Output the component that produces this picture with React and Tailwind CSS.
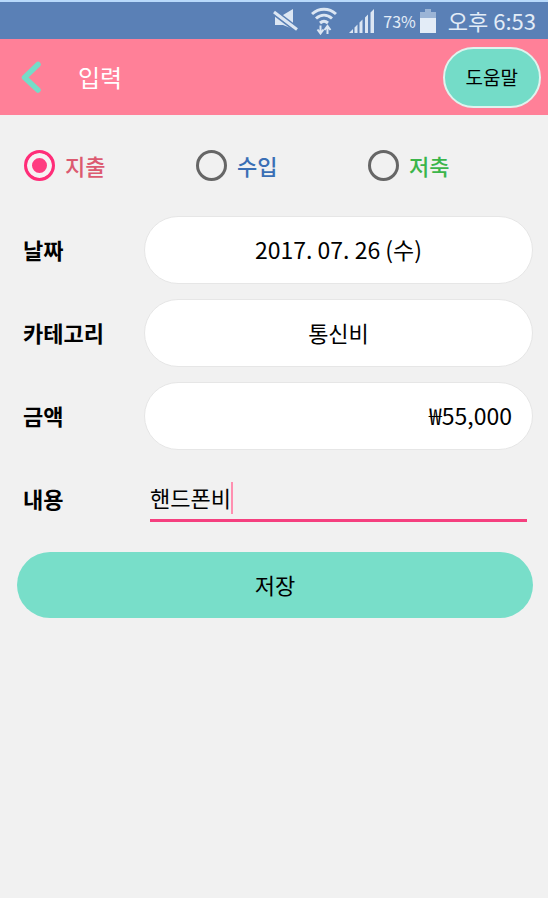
import React, { useState } from "react";

const TYPES = [
  { value: "expense", label: "지출", color: "text-[#dc5a70]" },
  { value: "income", label: "수입", color: "text-[#3a6fb5]" },
  { value: "saving", label: "저축", color: "text-[#3bb54a]" },
];

const fieldClass =
  "h-[68px] min-w-0 flex-1 appearance-none rounded-[34px] border border-[#e6e6e6] bg-white px-5 pb-[2px] text-black outline-none";

const StatusBar = () => (
  <div className="flex h-[39px] items-center justify-end border-t-2 border-[#b8d9fb] bg-[#5a80b6] pr-3 text-[#e3ecf7]">
    {/* Muted */}
    <svg className="mr-3 h-[24px] w-[26px]" viewBox="0 0 26 24" fill="none">
      <path d="M2 6h8l10-6v20l-10-4H2z" fill="#dce6f3" />
      <path d="M1 0.500l23 17.500" stroke="#5a80b6" strokeWidth="2" />
      <path d="M0 5l23 17.500" stroke="#5a80b6" strokeWidth="2" />
      <path d="M1 3l23 17.500" stroke="#dce6f3" strokeWidth="3" />
    </svg>
    {/* Wifi */}
    <svg className="mr-3 h-[28px] w-[26px]" viewBox="0 0 26 28" fill="none" stroke="#dce6f3" strokeWidth="3">
      <path d="M1 7c7-6.500 17-6.500 24 0" />
      <path d="M5 11.500c5-4.500 11-4.500 16 0" />
      <path d="M9 16c3-2.500 5-2.500 8 0" />
      <path d="M9.500 18.500v8M6.500 22.500l3 4 3-4" strokeWidth="2" />
      <path d="M16.500 27v-8M13.500 23l3-4 3 4" strokeWidth="2" />
    </svg>
    {/* Signal */}
    <svg className="mr-2 h-[24px] w-[26px]" viewBox="0 0 26 24" fill="#dce6f3">
      <path d="M0 24l4-4v4zM5.500 24v-5.500l3-3V24zM10.500 24V13.500l3-3V24zM16 24V8.500l3-3V24zM21.500 24V3.500L25 0v24z" />
    </svg>
    <span className="text-[16px]">73%</span>
    <svg className="mr-3 ml-1 h-[24px] w-[16px]" viewBox="0 0 16 24">
      <path d="M5 0h6v3h5v6H0V3h5z" fill="#9bb4d6" />
      <path d="M0 9h16v15H0z" fill="#e3ecf7" />
    </svg>
    <span className="text-[22px]">오후 6:53</span>
  </div>
);

const Header = () => (
  <header className="flex h-[76px] items-center bg-[#ff8098] pr-[7px] pl-5">
    <button type="button" aria-label="뒤로" className="mr-9">
      <svg className="h-[32px] w-[22px]" viewBox="0 0 22 32" fill="none">
        <path d="M18 3.500L4.500 16.500L18 29" stroke="#74dcc8" strokeWidth="5.500" strokeLinecap="round" strokeLinejoin="round" />
      </svg>
    </button>
    <h1 className="text-[24px] text-white">입력</h1>
    <button
      type="button"
      className="ml-auto h-[61px] rounded-full border-2 border-[#dff3ee] bg-[#74dcc8] px-[21px] text-[19px] text-black"
    >
      도움말
    </button>
  </header>
);

const Row = ({ id, label, children }) => (
  <div className="flex items-center">
    <label htmlFor={id} className="w-[127px] shrink-0 pb-[2px] pl-[6px] font-bold">
      {label}
    </label>
    {children}
  </div>
);

const App = () => {
  const [type, setType] = useState("expense");
  const [date, setDate] = useState("2017. 07. 26 (수)");
  const [category, setCategory] = useState("통신비");
  const [amount, setAmount] = useState("₩55,000");
  const [memo, setMemo] = useState("핸드폰비");

  const handleSubmit = (e) => {
    e.preventDefault();
  };

  return (
    <div className="flex min-h-screen flex-col border-b-2 border-white bg-[#f1f1f1] font-['Noto_Sans_CJK_KR',sans-serif]">
      <StatusBar />
      <Header />

      <form onSubmit={handleSubmit} className="flex flex-col gap-[15px] pr-[15px] pl-[17px] text-[22px] text-black">
        {/* Type */}
        <div className="grid h-[86px] grid-cols-3 items-center pt-[15px]">
          {TYPES.map((item) => (
            <label key={item.value} className={`flex items-center gap-[10px] pl-[7px] font-medium ${item.color}`}>
              <input
                type="radio"
                name="type"
                value={item.value}
                checked={type === item.value}
                onChange={() => setType(item.value)}
                className="size-[31px] appearance-none rounded-full border-3 border-[#666666] checked:border-[#ff2d78] checked:bg-[#ff3b80] checked:shadow-[inset_0_0_0_5px_#f6f1f3]"
              />
              {item.label}
            </label>
          ))}
        </div>

        <Row id="date" label="날짜">
          <input
            id="date"
            type="text"
            value={date}
            onChange={(e) => setDate(e.target.value)}
            className={`${fieldClass} text-center text-[23px]`}
          />
        </Row>

        <Row id="category" label="카테고리">
          <select
            id="category"
            value={category}
            onChange={(e) => setCategory(e.target.value)}
            className={`${fieldClass} text-center`}
          >
            <option value="통신비">통신비</option>
          </select>
        </Row>

        <Row id="amount" label="금액">
          <input
            id="amount"
            type="text"
            value={amount}
            onChange={(e) => setAmount(e.target.value)}
            className={`${fieldClass} text-right text-[23px]`}
          />
        </Row>

        {/* Memo */}
        <Row id="memo" label="내용">
          <div className="flex h-[68px] min-w-0 flex-1 items-center px-[6px]">
            <div className="flex h-[46px] flex-1 items-center border-b-3 border-[#f5407f]">
              <input
                id="memo"
                type="text"
                value={memo}
                onChange={(e) => setMemo(e.target.value)}
                className="field-sizing-content caret-transparent outline-none"
              />
              <span className="h-8 w-[2px] bg-[#ff8fb0]" />
            </div>
          </div>
        </Row>

        <button type="submit" className="mt-1 h-[66px] rounded-[33px] bg-[#78dec9] pb-[2px]">
          저장
        </button>
      </form>
    </div>
  );
};

export default App;
